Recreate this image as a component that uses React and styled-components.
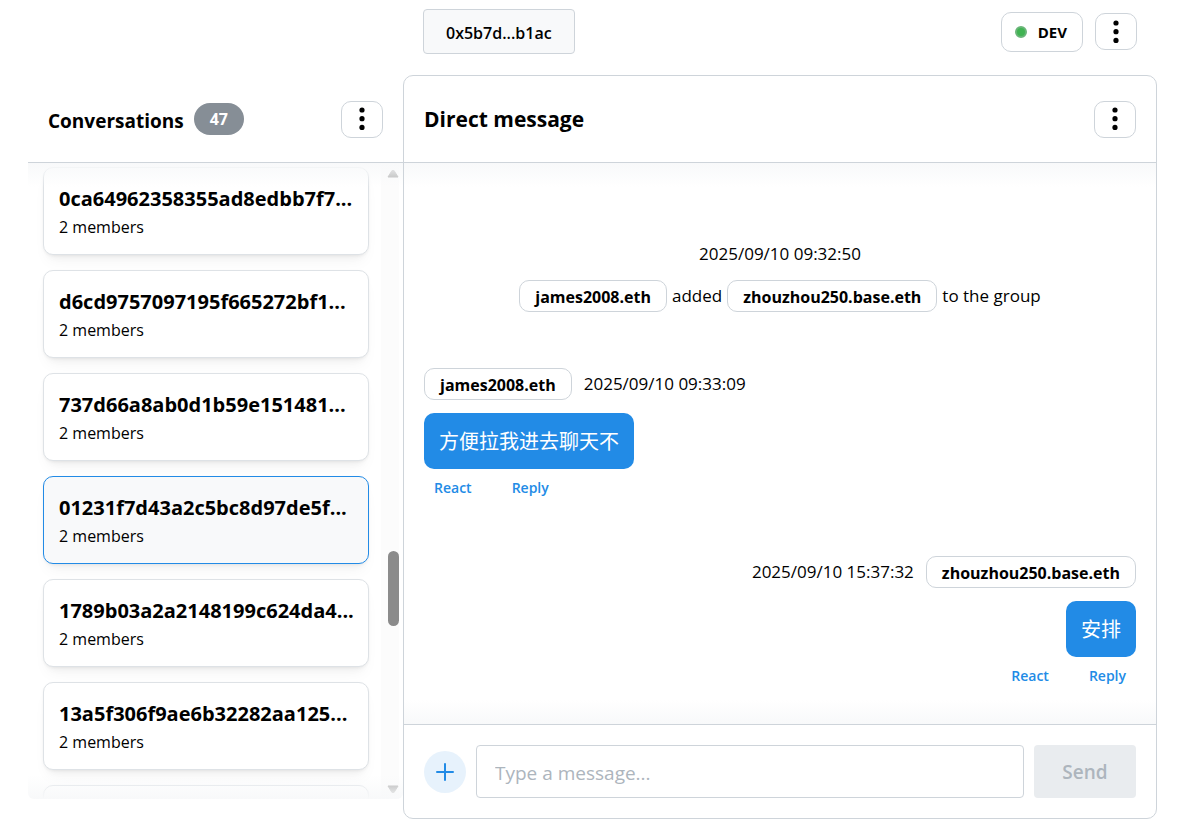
import React from "react";
import styled, { createGlobalStyle, css } from "styled-components";

const colors = {
  border: "#ced4da",
  cardBorder: "#dee2e6",
  blue: "#228be6",
  gray: "#868e96",
  fade: "#f8f9fa",
};

const conversations = [
  { id: "0ca64962358355ad8edbb7f7...", members: 2 },
  { id: "d6cd9757097195f665272bf1...", members: 2 },
  { id: "737d66a8ab0d1b59e151481...", members: 2 },
  { id: "01231f7d43a2c5bc8d97de5f...", members: 2, selected: true },
  { id: "1789b03a2a2148199c624da4...", members: 2 },
  { id: "13a5f306f9ae6b32282aa125...", members: 2 },
  { id: "", members: 2 },
];

const messages = [
  { sender: "james2008.eth", sentAt: "2025/09/10 09:33:09", text: "方便拉我进去聊天不" },
  { sender: "zhouzhou250.base.eth", sentAt: "2025/09/10 15:37:32", text: "安排", own: true },
];

// scroll position of the conversation list, as shares of the track
const scroll = { before: 123, thumb: 25, after: 52 };

const GlobalStyle = createGlobalStyle`
  *, *::before, *::after {
    box-sizing: border-box;
  }

  body {
    margin: 0;
    background: #fff;
    color: #000;
    font-family: "Open Sans", "Noto Sans CJK SC", sans-serif;
    font-size: 17px;
    line-height: 24px;
  }

  button, input {
    font-family: inherit;
    color: inherit;
  }

  h1, h2, h3, p, ul {
    margin: 0;
    padding: 0;
  }
`;

const Page = styled.div`
  display: grid;
  grid-template-columns: 375px minmax(0, 1fr);
  grid-template-rows: auto minmax(0, 1fr);
  height: 100vh;
  padding: 0 33px 11px 28px;
`;

const TopBar = styled.header`
  grid-column: 2;
  display: flex;
  align-items: center;
  gap: 12px;
  padding: 9px 20px 21px;
`;

const AddressButton = styled.button`
  height: 45px;
  margin-right: auto;
  padding: 2px 22px 0;
  border: 1px solid ${colors.border};
  border-radius: 4px;
  background: #f8f9fa;
  font-size: 16px;
  font-weight: 600;
`;

const EnvButton = styled.button`
  display: flex;
  align-items: center;
  gap: 11px;
  height: 40px;
  padding: 0 15px 0 13px;
  border: 1px solid ${colors.border};
  border-radius: 10px;
  background: #fff;
  font-size: 15px;
  font-weight: 700;
`;

const StatusDot = styled.span`
  width: 12px;
  height: 12px;
  border: 2px solid #69b578;
  border-radius: 50%;
  background: #40b352;
`;

const IconButton = styled.button`
  display: flex;
  align-items: center;
  justify-content: center;
  width: 42px;
  height: 37px;
  padding: 0;
  border: 1px solid ${colors.border};
  border-radius: 10px;
  background: #fff;
`;

const Sidebar = styled.aside`
  display: flex;
  flex-direction: column;
  min-height: 0;
  padding: 1px 0 20px;
`;

const SectionHeader = styled.div`
  display: flex;
  flex: none;
  align-items: center;
  justify-content: space-between;
  height: 87px;
  padding: 0 20px;
  border-bottom: 1px solid ${colors.border};
`;

const TitleGroup = styled.div`
  display: flex;
  align-items: center;
  gap: 10px;
`;

const SidebarTitle = styled.h2`
  padding-top: 4px;
  font-size: 19px;
  font-weight: 700;
  line-height: 32px;
`;

const ChatTitle = styled.h1`
  font-size: 21px;
  font-weight: 700;
  line-height: 32px;
`;

const Badge = styled.span`
  padding: 0 16px;
  border-radius: 16px;
  background: ${colors.gray};
  color: #fff;
  font-size: 16px;
  font-weight: 700;
  line-height: 32px;
`;

const fadeEdges = css`
  position: relative;

  &::before,
  &::after {
    content: "";
    position: absolute;
    left: 0;
    right: 0;
    height: 24px;
    pointer-events: none;
  }

  &::before {
    top: 0;
    background: linear-gradient(${colors.fade}, transparent);
  }

  &::after {
    bottom: 0;
    background: linear-gradient(transparent, ${colors.fade});
  }
`;

const ListArea = styled.div`
  ${fadeEdges}
  display: flex;
  flex: 1;
  min-height: 0;
  padding-right: 4px;
  overflow: hidden;
  border-radius: 0 0 6px 6px;
`;

const List = styled.ul`
  display: flex;
  flex: 1;
  flex-direction: column;
  gap: 15px;
  min-width: 0;
  padding: 4px 12px 0 15px;
  list-style: none;
`;

const Card = styled.li`
  flex: none;
  height: 88px;
  padding: 15px 10px 15px 15px;
  border: 1px solid ${(p) => (p.$selected ? colors.blue : colors.cardBorder)};
  border-radius: 10px;
  background: ${(p) => (p.$selected ? "#f8f9fa" : "#fff")};
  box-shadow: 0 1px 3px rgba(0, 0, 0, 0.05), 0 10px 15px -5px rgba(0, 0, 0, 0.05),
    0 7px 7px -5px rgba(0, 0, 0, 0.04);
`;

const CardTitle = styled.h3`
  overflow: hidden;
  font-size: 20px;
  font-weight: 700;
  line-height: 32px;
  white-space: nowrap;
`;

const MemberCount = styled.p`
  font-size: 16px;
`;

const Scrollbar = styled.div`
  display: flex;
  flex: none;
  flex-direction: column;
  align-items: center;
  width: 18px;
  padding: 6px 0 5px 6px;
  background: #fcfcfc;
`;

const Track = styled.div`
  display: flex;
  flex: 1;
  flex-direction: column;
  width: 11px;
  padding: 3px 0;
`;

const Thumb = styled.div`
  border-radius: 6px;
  background: #8b8b8b;
`;

const Panel = styled.main`
  display: flex;
  flex-direction: column;
  min-height: 0;
  border: 1px solid ${colors.border};
  border-radius: 10px;
`;

const Thread = styled.div`
  ${fadeEdges}
  display: flex;
  flex: 1;
  flex-direction: column;
  justify-content: flex-end;
  gap: 56px;
  min-height: 0;
  padding: 0 20px 36px;
  overflow: hidden;
`;

const GroupUpdate = styled.div`
  display: flex;
  flex-direction: column;
  align-items: center;
  gap: 14px;
`;

const UpdateLine = styled.div`
  display: flex;
  align-items: center;
  gap: 5px;
`;

const MemberChip = styled.button`
  height: 32px;
  padding: 2px 15px 0;
  border: 1px solid ${colors.border};
  border-radius: 10px;
  background: #fff;
  font-size: 16px;
  font-weight: 700;
`;

const Message = styled.article`
  display: flex;
  flex-direction: column;
  align-items: ${(p) => (p.$own ? "flex-end" : "flex-start")};
`;

const MessageMeta = styled.div`
  display: flex;
  flex-direction: ${(p) => (p.$own ? "row-reverse" : "row")};
  align-items: center;
  gap: 12px;
`;

const Bubble = styled.p`
  margin: 13px 0 5px;
  padding: 13px 15px 11px;
  border-radius: 10px;
  background: ${colors.blue};
  color: #fff;
  font-size: 20px;
  line-height: 32px;
`;

const MessageActions = styled.div`
  display: flex;
  gap: 20px;
`;

const ActionButton = styled.button`
  height: 26px;
  padding: 0 10px;
  border: 0;
  background: none;
  color: ${colors.blue};
  font-size: 14px;
  font-weight: 600;
`;

const Composer = styled.form`
  display: flex;
  flex: none;
  align-items: center;
  gap: 10px;
  padding: 20px;
  border-top: 1px solid ${colors.border};
`;

const AttachButton = styled.button`
  display: flex;
  flex: none;
  align-items: center;
  justify-content: center;
  width: 42px;
  height: 42px;
  padding: 0;
  border: 0;
  border-radius: 50%;
  background: #e7f2fc;
  color: ${colors.blue};
`;

const MessageInput = styled.input`
  flex: 1;
  min-width: 0;
  height: 53px;
  padding: 2px 18px 0;
  border: 1px solid ${colors.border};
  border-radius: 4px;
  font-size: 19px;

  &::placeholder {
    color: #adb5bd;
    opacity: 1;
  }
`;

const SendButton = styled.button`
  width: 102px;
  height: 53px;
  border: 0;
  border-radius: 4px;
  background: #e9ecef;
  color: #adb5bd;
  font-size: 19px;
  font-weight: 600;
`;

const MenuButton = ({ label }) => (
  <IconButton type="button" aria-label={label}>
    <svg width="6" height="24" viewBox="0 0 6 24" aria-hidden="true">
      <circle cx="3" cy="3" r="2.6" />
      <circle cx="3" cy="11.7" r="2.6" />
      <circle cx="3" cy="20.4" r="2.6" />
    </svg>
  </IconButton>
);

const Arrow = ({ down }) => (
  <svg width="12" height="9" viewBox="0 0 12 9" fill="#a8a8a8" stroke="#a8a8a8" strokeLinejoin="round" aria-hidden="true">
    <path d={down ? "M1 1H11L7 7.5H5Z" : "M1 8H11L7 1.5H5Z"} />
  </svg>
);

const ConversationList = () => (
  <ListArea>
    <List>
      {conversations.map(({ id, members, selected }, index) => (
        <Card key={index} $selected={selected}>
          {id && (
            <>
              <CardTitle>{id}</CardTitle>
              <MemberCount>{members} members</MemberCount>
            </>
          )}
        </Card>
      ))}
    </List>
    <Scrollbar aria-hidden="true">
      <Arrow />
      <Track>
        <div style={{ flexGrow: scroll.before }} />
        <Thumb style={{ flexGrow: scroll.thumb }} />
        <div style={{ flexGrow: scroll.after }} />
      </Track>
      <Arrow down />
    </Scrollbar>
  </ListArea>
);

const App = () => {
  return (
    <>
      <GlobalStyle />
      <Page>
        <TopBar>
          <AddressButton type="button">0x5b7d...b1ac</AddressButton>
          <EnvButton type="button">
            <StatusDot />
            DEV
          </EnvButton>
          <MenuButton label="App menu" />
        </TopBar>

        <Sidebar>
          <SectionHeader>
            <TitleGroup>
              <SidebarTitle>Conversations</SidebarTitle>
              <Badge>47</Badge>
            </TitleGroup>
            <MenuButton label="Conversations menu" />
          </SectionHeader>
          <ConversationList />
        </Sidebar>

        <Panel>
          <SectionHeader>
            <ChatTitle>Direct message</ChatTitle>
            <MenuButton label="Conversation menu" />
          </SectionHeader>
          <Thread>
            <GroupUpdate>
              <time>2025/09/10 09:32:50</time>
              <UpdateLine>
                <MemberChip type="button">james2008.eth</MemberChip>
                <span>added</span>
                <MemberChip type="button">zhouzhou250.base.eth</MemberChip>
                <span>to the group</span>
              </UpdateLine>
            </GroupUpdate>
            {messages.map(({ sender, sentAt, text, own }) => (
              <Message key={sentAt} $own={own}>
                <MessageMeta $own={own}>
                  <MemberChip type="button">{sender}</MemberChip>
                  <time>{sentAt}</time>
                </MessageMeta>
                <Bubble>{text}</Bubble>
                <MessageActions>
                  <ActionButton type="button">React</ActionButton>
                  <ActionButton type="button">Reply</ActionButton>
                </MessageActions>
              </Message>
            ))}
          </Thread>
          <Composer onSubmit={(e) => e.preventDefault()}>
            <AttachButton type="button" aria-label="Add attachment">
              <svg width="18" height="18" viewBox="0 0 18 18" stroke="currentColor" strokeWidth="2" strokeLinecap="round" aria-hidden="true">
                <path d="M9 1V17M1 9H17" />
              </svg>
            </AttachButton>
            <MessageInput type="text" placeholder="Type a message..." aria-label="Message" />
            <SendButton type="submit" disabled>
              Send
            </SendButton>
          </Composer>
        </Panel>
      </Page>
    </>
  );
};

export default App;
